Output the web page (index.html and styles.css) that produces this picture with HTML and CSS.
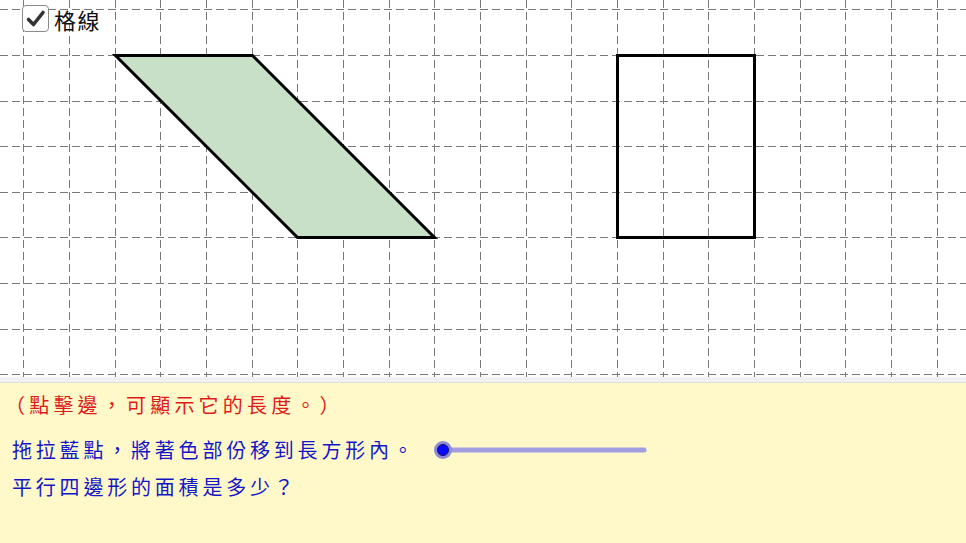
FILE: index.html
```html
<!DOCTYPE html>
<html lang="zh-Hant">
<head>
<meta charset="utf-8">
<title>平行四邊形的面積</title>
<link rel="stylesheet" href="styles.css">
</head>
<body>
<div class="app">
  <div class="canvas">
    <svg class="board" width="966" height="377" viewBox="0 0 966 377">
      <g class="grid">
        <line x1="23.5" y1="0" x2="23.5" y2="377"/>
        <line x1="69.5" y1="0" x2="69.5" y2="377"/>
        <line x1="115.5" y1="0" x2="115.5" y2="377"/>
        <line x1="160.5" y1="0" x2="160.5" y2="377"/>
        <line x1="206.5" y1="0" x2="206.5" y2="377"/>
        <line x1="252.5" y1="0" x2="252.5" y2="377"/>
        <line x1="297.5" y1="0" x2="297.5" y2="377"/>
        <line x1="343.5" y1="0" x2="343.5" y2="377"/>
        <line x1="389.5" y1="0" x2="389.5" y2="377"/>
        <line x1="434.5" y1="0" x2="434.5" y2="377"/>
        <line x1="480.5" y1="0" x2="480.5" y2="377"/>
        <line x1="526.5" y1="0" x2="526.5" y2="377"/>
        <line x1="571.5" y1="0" x2="571.5" y2="377"/>
        <line x1="617.5" y1="0" x2="617.5" y2="377"/>
        <line x1="663.5" y1="0" x2="663.5" y2="377"/>
        <line x1="708.5" y1="0" x2="708.5" y2="377"/>
        <line x1="754.5" y1="0" x2="754.5" y2="377"/>
        <line x1="800.5" y1="0" x2="800.5" y2="377"/>
        <line x1="845.5" y1="0" x2="845.5" y2="377"/>
        <line x1="891.5" y1="0" x2="891.5" y2="377"/>
        <line x1="937.5" y1="0" x2="937.5" y2="377"/>
        <line x1="0" y1="9.5" x2="966" y2="9.5"/>
        <line x1="0" y1="55.5" x2="966" y2="55.5"/>
        <line x1="0" y1="101.5" x2="966" y2="101.5"/>
        <line x1="0" y1="146.5" x2="966" y2="146.5"/>
        <line x1="0" y1="192.5" x2="966" y2="192.5"/>
        <line x1="0" y1="237.5" x2="966" y2="237.5"/>
        <line x1="0" y1="283.5" x2="966" y2="283.5"/>
        <line x1="0" y1="329.5" x2="966" y2="329.5"/>
        <line x1="0" y1="374.5" x2="966" y2="374.5"/>
      </g>
      <polygon class="para" points="115.5,55.5 252.5,55.5 434.5,237.5 297.5,237.5"/>
      <rect class="rect" x="617.5" y="55.5" width="137" height="182"/>
    </svg>
    <label class="toggle">
      <span class="box">
        <svg width="22" height="22" viewBox="0 0 22 22"><path d="M3.5 11.5 L8.5 16.5 L18 4.5" /></svg>
      </span>
      <span class="toggle-label">格線</span>
    </label>
  </div>
  <div class="divider"></div>
  <div class="panel">
    <div class="line red">（點擊邊，可顯示它的長度。）</div>
    <div class="line blue row">
      <span>拖拉藍點，將著色部份移到長方形內。</span>
      <svg class="slider" width="222" height="22" viewBox="0 0 222 22">
        <line class="track" x1="10" y1="11" x2="211" y2="11"/>
        <circle class="halo" cx="10" cy="11" r="9"/>
        <circle class="knob" cx="10" cy="11" r="5.5"/>
      </svg>
    </div>
    <div class="line blue second">平行四邊形的面積是多少？</div>
  </div>
</div>
</body>
</html>
```

FILE: styles.css
```css
html, body {
  margin: 0;
  padding: 0;
  background: #ffffff;
}
.app {
  width: 966px;
  height: 543px;
  overflow: hidden;
  font-family: "Noto Sans CJK TC", "Noto Sans", sans-serif;
}
.canvas {
  position: relative;
  height: 377px;
  background: #ffffff;
}
.board {
  display: block;
}
.grid line {
  stroke: #7a7a7a;
  stroke-width: 1;
  stroke-dasharray: 8 4;
}
.para {
  fill: #c8dfc8;
  stroke: #000;
  stroke-width: 3;
  stroke-linejoin: miter;
}
.rect {
  fill: none;
  stroke: #000;
  stroke-width: 3;
}
.toggle {
  position: absolute;
  left: 22px;
  top: 5px;
  display: flex;
  align-items: center;
  gap: 5px;
}
.box {
  width: 25px;
  height: 25px;
  border: 1.5px solid #8a8a8a;
  border-radius: 4px;
  background: #fff;
  display: flex;
  align-items: center;
  justify-content: center;
}
.box path {
  fill: none;
  stroke: #333;
  stroke-width: 3.6;
  stroke-linecap: round;
  stroke-linejoin: round;
}
.toggle-label {
  font-size: 22px;
  line-height: 26px;
  color: #111;
  letter-spacing: 1.5px;
}
.divider {
  height: 5px;
  background: #f1f1f1;
  border-bottom: 1px solid #dedede;
}
.panel {
  height: 160px;
  background: #fff9c9;
  padding: 10px 0 0 12px;
  box-sizing: border-box;
}
.line {
  font-size: 20px;
  line-height: 24px;
  letter-spacing: 3.8px;
  white-space: nowrap;
}
.red {
  color: #e01a1a;
  margin-left: -7px;
  letter-spacing: 4.2px;
}
.blue {
  color: #1515c8;
}
.row {
  display: flex;
  align-items: center;
  margin-top: 21px;
}
.slider {
  display: block;
  margin-left: 16px;
}
.track {
  stroke: #a29de0;
  stroke-width: 5;
  stroke-linecap: round;
}
.halo {
  fill: #8e8ad6;
}
.knob {
  fill: #0a0aff;
  stroke: #101060;
  stroke-width: 1;
}
.second {
  margin-top: 13px;
}
```
